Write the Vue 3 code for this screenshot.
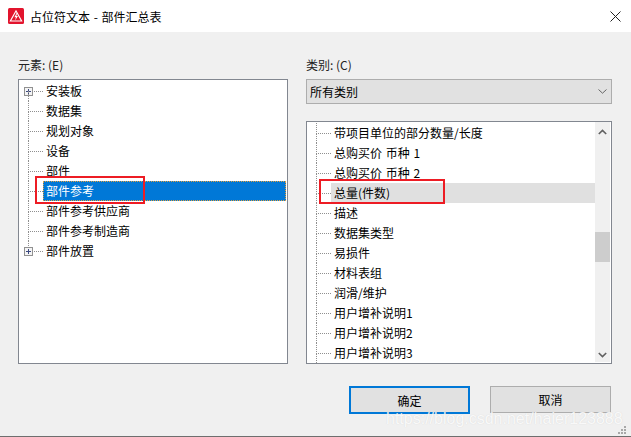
<template>
  <div class="dialog">
    <header class="titlebar">
      <svg class="app-icon" width="16" height="16" viewBox="0 0 16 16">
        <rect width="16" height="16" rx="1.5" fill="#e2142d" />
        <path d="M8 1.8 14.6 13.6H1.4Z" fill="#fff" />
        <path d="M8 3.9 12.7 12.4H3.3Z" fill="#e2142d" />
        <path d="M8.6 5 6.4 9.2H8L7 12.4 10 8H8.3L9.3 5Z" fill="#fff" />
      </svg>
      <span class="title">占位符文本 - 部件汇总表</span>
      <svg class="close" width="11" height="11" viewBox="0 0 11 11">
        <path d="M.5.5 10.5 10.5M10.5.5 .5 10.5" stroke="#222" stroke-width="1" fill="none" />
      </svg>
    </header>

    <main class="body">
      <section class="col left">
        <label class="caption">元素: (E)</label>
        <div class="tree left-tree">
          <div
            v-for="(item, i) in elements"
            :key="item.name"
            class="row"
            :class="{ selected: item.name === '部件参考', first: i === 0, last: i === elements.length - 1 }"
          >
            <span class="branch"></span>
            <span v-if="item.expand" class="plus"></span>
            <span class="text">{{ item.name }}</span>
          </div>
          <span class="mark mark-left"></span>
        </div>
      </section>

      <section class="col right">
        <label class="caption">类别: (C)</label>
        <div class="combo">
          <span>所有类别</span>
          <svg width="9" height="5" viewBox="0 0 9 5">
            <path d="M.5.5 4.5 4.2 8.5.5" stroke="#666" fill="none" />
          </svg>
        </div>
        <div class="tree right-tree">
          <div class="rows">
            <div v-for="name in categories" :key="name" class="row" :class="{ hover: name === '总量(件数)' }">
              <span class="branch"></span>
              <span class="text">{{ name }}</span>
            </div>
          </div>
          <div class="scrollbar">
            <svg width="9" height="6" viewBox="0 0 9 6">
              <path d="M.8 5 4.5 1.4 8.2 5" stroke="#606060" stroke-width="1.6" fill="none" />
            </svg>
            <div class="track"><div class="thumb"></div></div>
            <svg width="9" height="6" viewBox="0 0 9 6">
              <path d="M.8 1 4.5 4.6 8.2 1" stroke="#606060" stroke-width="1.6" fill="none" />
            </svg>
          </div>
          <span class="mark mark-right"></span>
        </div>
      </section>
    </main>

    <footer class="actions">
      <button class="btn primary">确定</button>
      <button class="btn">取消</button>
    </footer>
    <span class="watermark">https://blog.csdn.net/haier123888</span>
    <svg class="grip" width="8" height="8" viewBox="0 0 8 8" fill="#a8a8a8">
      <rect x="6" y="0" width="2" height="2" />
      <rect x="3" y="3" width="2" height="2" />
      <rect x="6" y="3" width="2" height="2" />
      <rect x="0" y="6" width="2" height="2" />
      <rect x="3" y="6" width="2" height="2" />
      <rect x="6" y="6" width="2" height="2" />
    </svg>
  </div>
</template>

<script setup>
const elements = [
  { name: '安装板', expand: true },
  { name: '数据集' },
  { name: '规划对象' },
  { name: '设备' },
  { name: '部件' },
  { name: '部件参考' },
  { name: '部件参考供应商' },
  { name: '部件参考制造商' },
  { name: '部件放置', expand: true }
]

const categories = [
  '带项目单位的部分数量/长度',
  '总购买价 币种 1',
  '总购买价 币种 2',
  '总量(件数)',
  '描述',
  '数据集类型',
  '易损件',
  '材料表组',
  '润滑/维护',
  '用户增补说明1',
  '用户增补说明2',
  '用户增补说明3'
]
</script>

<style>
html,
body {
  margin: 0;
  overflow: hidden;
}
</style>

<style scoped>
.dialog {
  position: relative;
  width: 631px;
  height: 437px;
  background: #f0f0f0;
  box-shadow: inset 0 -1px 0 #6e6e6e;
  font-family: "Noto Sans CJK SC", "Liberation Sans", sans-serif;
  font-size: 12px;
  word-spacing: 1px;
  color: #000;
  overflow: hidden;
}

.titlebar {
  height: 32px;
  background: #fff;
  display: flex;
  align-items: center;
  padding: 0 10px 0 8px;
}

.app-icon {
  flex: none;
}

.title {
  margin-left: 6px;
  flex: 1;
}

.body {
  display: flex;
  gap: 18px;
  padding: 25px 19px 0 18px;
}

.col {
  display: flex;
  flex-direction: column;
}

.left {
  width: 270px;
}

.right {
  width: 306px;
}

.caption {
  height: 22px;
  line-height: 16px;
  color: #222;
  word-spacing: 0;
}

.tree {
  position: relative;
  box-sizing: border-box;
  background: #fff;
  border: 1px solid #828790;
}

.left-tree {
  height: 285px;
  padding-top: 1px;
}

.right-tree {
  height: 243px;
  margin-top: 17px;
  display: flex;
  overflow: hidden;
}

.rows {
  flex: 1;
  padding-top: 1px;
}

.row {
  position: relative;
  height: 20px;
  line-height: 20px;
  padding-left: 26px;
}

.branch {
  position: absolute;
  left: 9px;
  top: 0;
  width: 14px;
  height: 10px;
  border-left: 1px dotted #8f8f8f;
  border-bottom: 1px dotted #8f8f8f;
}

.row::after {
  content: "";
  position: absolute;
  left: 9px;
  top: 10px;
  height: 10px;
  border-left: 1px dotted #8f8f8f;
}

.row.first .branch {
  border-left: none;
  left: 10px;
}

.row.last::after {
  display: none;
}

.plus {
  position: absolute;
  left: 5px;
  top: 6px;
  width: 9px;
  height: 9px;
  box-sizing: border-box;
  border: 1px solid #919191;
  background:
    linear-gradient(#3c4a80, #3c4a80) center / 5px 1px no-repeat,
    linear-gradient(#3c4a80, #3c4a80) center / 1px 5px no-repeat,
    #f4f4f4;
}

.text {
  position: relative;
  padding: 0 1px;
}

.selected::before {
  content: "";
  position: absolute;
  left: 24px;
  right: 1px;
  top: 0;
  bottom: 0;
  box-sizing: border-box;
  background: #0078d7;
  border: 1px dotted #e0a040;
}

.selected .text {
  color: #fff;
}

.hover::before {
  content: "";
  position: absolute;
  left: 24px;
  right: 0;
  top: 0;
  bottom: 0;
  background: #e0e0e0;
}

.scrollbar {
  flex: none;
  width: 15px;
  margin-right: 1px;
  margin-bottom: 1px;
  display: flex;
  flex-direction: column;
  align-items: center;
  background: #f0f0f0;
  padding: 7px 0 4px;
  box-sizing: border-box;
}

.track {
  flex: 1;
  align-self: stretch;
  padding-top: 97px;
}

.thumb {
  height: 30px;
  background: #cdcdcd;
}

.mark {
  position: absolute;
  box-sizing: border-box;
  border: 2px solid #ed1c24;
}

.mark-left {
  left: 16px;
  top: 96px;
  width: 110px;
  height: 28px;
}

.mark-right {
  left: 12px;
  top: 57px;
  width: 126px;
  height: 25px;
}

.combo {
  box-sizing: border-box;
  height: 25px;
  background: #e1e1e1;
  border: 1px solid #adadad;
  display: flex;
  align-items: center;
  justify-content: space-between;
  padding: 0 4px 0 3px;
}

.actions {
  display: flex;
  justify-content: flex-end;
  gap: 20px;
  padding: 22px 20px 0 0;
}

.btn {
  box-sizing: border-box;
  width: 121px;
  height: 27px;
  background: #e1e1e1;
  border: 1px solid #adadad;
  padding: 0;
  font: inherit;
  color: #000;
}

.btn.primary {
  height: 28px;
  border: 2px solid #0078d7;
}

.watermark {
  position: absolute;
  left: 386px;
  top: 410px;
  font-family: "Liberation Sans", sans-serif;
  font-size: 16px;
  line-height: 18px;
  word-spacing: 0;
  color: rgba(255, 255, 255, 0.85);
  text-shadow: 0 0 1px rgba(170, 170, 170, 0.4);
  white-space: nowrap;
}

.grip {
  position: absolute;
  right: 5px;
  bottom: 3px;
}
</style>
